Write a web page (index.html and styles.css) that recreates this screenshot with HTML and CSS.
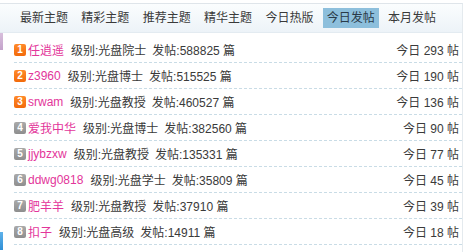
FILE: index.html
```html
<!DOCTYPE html>
<html lang="zh-CN">
<head>
<meta charset="utf-8">
<title>今日发帖</title>
<link rel="stylesheet" href="styles.css">
</head>
<body>
<div class="page">
  <span class="edge edge-top"></span>
  <span class="edge edge-bottom"></span>
  <div class="panel">
    <ul class="tabs">
      <li class="tab">最新主题</li>
      <li class="tab">精彩主题</li>
      <li class="tab">推荐主题</li>
      <li class="tab">精华主题</li>
      <li class="tab">今日热版</li>
      <li class="tab active">今日发帖</li>
      <li class="tab">本月发帖</li>
    </ul>
    <ul class="list">
      <li class="row"><span class="num hot">1</span><a class="user">任逍遥</a><span class="meta">级别:光盘院士</span><span class="meta">发帖:588825 篇</span><span class="today">今日 293 帖</span></li>
      <li class="row"><span class="num hot">2</span><a class="user">z3960</a><span class="meta">级别:光盘博士</span><span class="meta">发帖:515525 篇</span><span class="today">今日 190 帖</span></li>
      <li class="row"><span class="num hot">3</span><a class="user">srwam</a><span class="meta">级别:光盘教授</span><span class="meta">发帖:460527 篇</span><span class="today">今日 136 帖</span></li>
      <li class="row"><span class="num">4</span><a class="user">爱我中华</a><span class="meta">级别:光盘博士</span><span class="meta">发帖:382560 篇</span><span class="today">今日 90 帖</span></li>
      <li class="row"><span class="num">5</span><a class="user">jjybzxw</a><span class="meta">级别:光盘教授</span><span class="meta">发帖:135331 篇</span><span class="today">今日 77 帖</span></li>
      <li class="row"><span class="num">6</span><a class="user">ddwg0818</a><span class="meta">级别:光盘学士</span><span class="meta">发帖:35809 篇</span><span class="today">今日 45 帖</span></li>
      <li class="row"><span class="num">7</span><a class="user">肥羊羊</a><span class="meta">级别:光盘教授</span><span class="meta">发帖:37910 篇</span><span class="today">今日 39 帖</span></li>
      <li class="row"><span class="num">8</span><a class="user">扣子</a><span class="meta">级别:光盘高级</span><span class="meta">发帖:14911 篇</span><span class="today">今日 18 帖</span></li>
    </ul>
  </div>
</div>
</body>
</html>
```

FILE: styles.css
```css
* { box-sizing: border-box; }
html, body { margin: 0; padding: 0; background: #fff; }
body {
  font-family: "Liberation Sans", "Noto Sans CJK SC", sans-serif;
  font-size: 12px;
  color: #3a3a3a;
}
.page {
  position: relative;
  width: 468px;
  height: 252px;
  overflow: hidden;
  padding-top: 3px;
}
.edge {
  position: absolute;
  left: 0;
  width: 3px;
}
.edge-top {
  top: 33px;
  height: 17px;
  background: linear-gradient(#d8bfdc, #c4a3cb);
}
.edge-bottom {
  top: 232px;
  height: 18px;
  background: linear-gradient(#5fb2ea, #2f8fd6);
}
.panel {
  width: 463px;
  height: 249px;
  border-top: 1px solid #dfe5ea;
  border-right: 1px solid #e4eaee;
}
.tabs {
  list-style: none;
  margin: 0;
  padding: 0 0 0 16px;
  height: 29px;
  display: flex;
  align-items: center;
  gap: 5.33px;
  background: linear-gradient(#fbfdfe, #edf3f8);
  border-bottom: 1px solid #e3ebf1;
}
.tab {
  padding: 0 4px;
  height: 20px;
  line-height: 20px;
  color: #3a3a3a;
  white-space: nowrap;
}
.tab.active {
  background: #8dbfdc;
  color: #2a3a48;
}
.list {
  list-style: none;
  margin: 4px 0 0 14px;
  padding: 0;
  width: 448px;
}
.row {
  display: flex;
  align-items: center;
  height: 26px;
  border-bottom: 1px dashed #c9dce6;
  white-space: nowrap;
}
.num {
  width: 12px;
  height: 12px;
  border-radius: 2px;
  background: linear-gradient(#aaaaaa, #8e8e8e);
  color: #fff;
  font-size: 10px;
  font-weight: bold;
  line-height: 12px;
  text-align: center;
  margin-right: 2px;
}
.num.hot {
  background: linear-gradient(#ff8a2a, #f26a0a);
}
.user {
  color: #e3359a;
  margin-right: 7px;
}
.meta {
  margin-right: 6px;
}
.today {
  margin-left: auto;
  margin-right: 3px;
}
```
